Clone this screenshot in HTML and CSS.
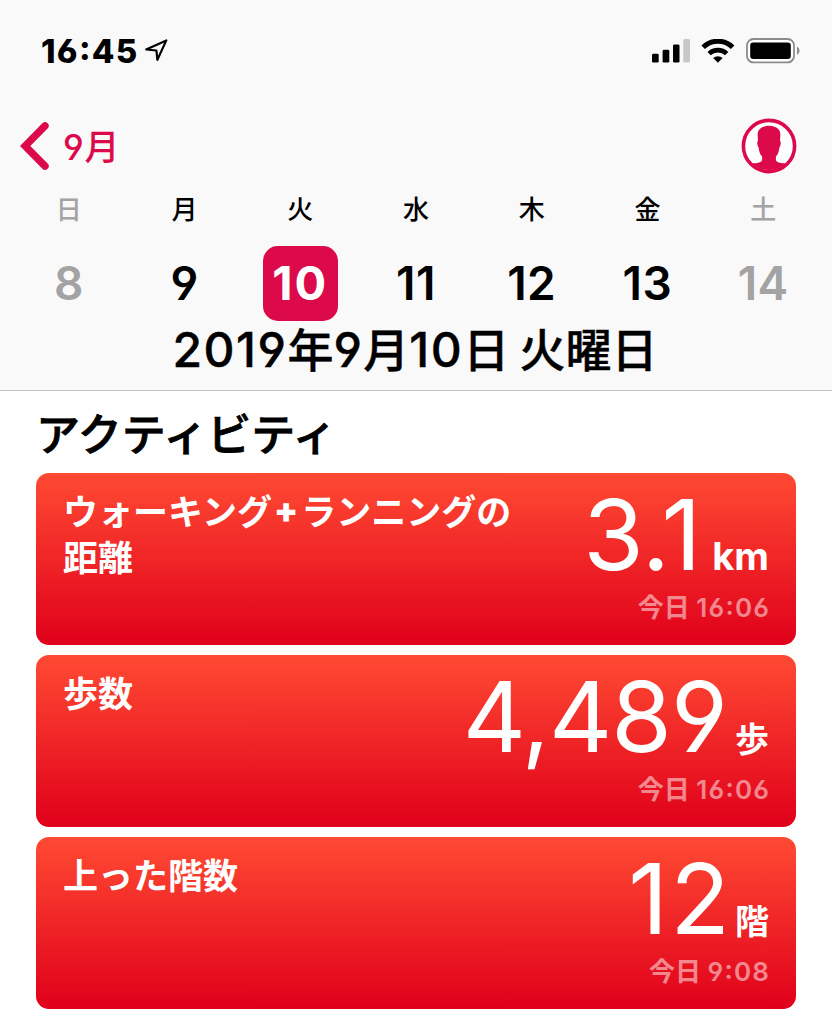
FILE: index.html
```html
<!DOCTYPE html>
<html lang="ja">
<head>
  <meta charset="UTF-8">
  <meta name="viewport" content="width=device-width, initial-scale=1.0">
  <title>ヘルスケア</title>
  <link rel="stylesheet" href="styles.css">
</head>
<body>

  <header class="header">
    <div class="status-bar">
      <span class="time">16:45</span>
      <svg class="location" width="24" height="24" viewBox="0 0 24 24">
        <path d="M1.2 10.5 L21.3 1.4 L12.4 20.8 L11.4 11.5 Z" fill="none" stroke="#000" stroke-width="2.2" stroke-linejoin="round"/>
      </svg>
      <svg class="signal" width="38" height="24" viewBox="0 0 38 24">
        <rect x="0" y="14.8" width="6.7" height="8.8" rx="1.4"/>
        <rect x="10.6" y="10.8" width="6.7" height="12.8" rx="1.4"/>
        <rect x="21" y="5.4" width="6.5" height="18.2" rx="1.4"/>
        <rect x="31.3" y="0" width="6.7" height="23.6" rx="1.4" fill="#c8c8c8"/>
      </svg>
      <svg class="wifi" width="34" height="24" viewBox="0 0 34 24">
        <path d="M2.2 8.2 A21 21 0 0 1 31.6 8.2" fill="none" stroke="#000" stroke-width="5"/>
        <path d="M8.1 14.6 A12.8 12.8 0 0 1 25.7 14.6" fill="none" stroke="#000" stroke-width="4.6"/>
        <path d="M12.2 19 A7 7 0 0 1 21.6 19 L16.9 23.7 Z"/>
      </svg>
      <svg class="battery" width="54" height="26" viewBox="0 0 54 26">
        <rect x="1" y="1" width="47" height="23.4" rx="6.5" fill="#fff" stroke="#8c8c8c" stroke-width="1.8"/>
        <rect x="4.2" y="4.4" width="40.6" height="16.6" rx="3"/>
        <path d="M51 8.6 Q53.6 9.8 53.6 12.7 Q53.6 15.6 51 17 Z" fill="#8c8c8c"/>
      </svg>
    </div>

    <div class="nav-bar">
      <a class="back" href="#">
        <svg width="31" height="50" viewBox="0 0 31 50">
          <path d="M26 4.8 L6.2 25 L26 45.2" fill="none" stroke="#dc0a4b" stroke-width="7.4" stroke-linecap="round" stroke-linejoin="miter"/>
        </svg>
        <span>9月</span>
      </a>
      <svg class="profile" width="56" height="56" viewBox="0 0 56 56">
        <circle cx="28" cy="28" r="25.6" fill="#fff" stroke="#dc0a4b" stroke-width="3.6"/>
        <path d="M28 7.8 C32 7.8 35.5 9 37.6 11.4 C39 13 39.6 15 39.3 18 L39 22.8 C40.2 23.4 39.8 28 38.4 29.4 C38 33 37.2 36.2 34.9 38.4 L34.9 42 C35.5 45 41 44.9 44.8 45.6 A25 25 0 0 1 11.2 45.6 C15 44.9 20.5 45 21.1 42 L21.1 38.4 C18.8 36.2 18 33 17.6 29.4 C16.2 28 15.8 23.4 17 22.8 L16.7 18 C16.4 15 17 13 18.4 11.4 C20.5 9 24 7.8 28 7.8 Z" fill="#dc0a4b"/>
      </svg>
    </div>

    <div class="week">
      <div class="day weekend"><span class="name">日</span><span class="num">8</span></div>
      <div class="day"><span class="name">月</span><span class="num">9</span></div>
      <div class="day selected"><span class="name">火</span><span class="num">10</span></div>
      <div class="day"><span class="name">水</span><span class="num">11</span></div>
      <div class="day"><span class="name">木</span><span class="num">12</span></div>
      <div class="day"><span class="name">金</span><span class="num">13</span></div>
      <div class="day weekend"><span class="name">土</span><span class="num">14</span></div>
    </div>

    <div class="full-date"><span>2019</span>年<span>9</span>月<span>10</span>日 火曜日</div>
  </header>

  <main class="content">
    <h1>アクティビティ</h1>

    <div class="card">
      <div class="title">ウォーキング<b>+</b>ランニングの<br>距離</div>
      <div class="data">
        <div class="value"><span class="amount">3.1</span><span class="unit km">km</span></div>
        <div class="updated">今日 <span>16:06</span></div>
      </div>
    </div>

    <div class="card">
      <div class="title">歩数</div>
      <div class="data">
        <div class="value"><span class="amount steps">4,489</span><span class="unit">歩</span></div>
        <div class="updated">今日 <span>16:06</span></div>
      </div>
    </div>

    <div class="card">
      <div class="title">上った階数</div>
      <div class="data">
        <div class="value"><span class="amount floors">12</span><span class="unit">階</span></div>
        <div class="updated">今日 <span>9:08</span></div>
      </div>
    </div>
  </main>

</body>
</html>
```
FILE: styles.css
```css
* {
  box-sizing: border-box;
}

body {
  font-family: Inter, "Noto Sans CJK JP", sans-serif;
  font-feature-settings: "cv03", "cv04", "case"; /* open 6 and 9, raised colon */
  background-color: #fff;
  color: #000;
  margin: 0;
  height: 1024px;
  overflow: hidden;
}

.header {
  background-color: #f9f9f9;
  height: 391px;
  border-bottom: 1px solid #c4c4c6;
}

/* Status bar */
.status-bar {
  display: flex;
  align-items: center;
  height: 102px;
  padding: 0 32px 0 41px;
}

.time {
  font-size: 33px;
  font-weight: 800;
  letter-spacing: 1.3px;
  line-height: 40px;
  width: 104px;
}

.signal {
  margin-left: auto;
}

.wifi {
  margin-left: 11px;
}

.battery {
  margin-left: 11px;
}

/* Navigation */
.nav-bar {
  display: flex;
  align-items: center;
  justify-content: space-between;
  height: 88px;
  padding: 0 35px 0 19px;
}

.back {
  display: flex;
  align-items: center;
  gap: 13px;
  color: #dc0a4b;
  font-size: 35px;
  font-weight: 500;
  letter-spacing: 0.8px;
  line-height: 50px;
  text-decoration: none;
}

.back span {
  padding-top: 2px;
}

/* Week */
.week {
  display: flex;
  height: 131px;
  padding: 0 11px;
}

.day {
  flex: 1;
  display: flex;
  flex-direction: column;
  align-items: center;
}

.name {
  font-size: 26px;
  font-weight: 500;
  line-height: 40px;
  height: 56px;
}

.num {
  width: 75px;
  height: 75px;
  border-radius: 15px;
  font-size: 46px;
  font-weight: 600;
  letter-spacing: 0.5px;
  line-height: 74px;
  text-align: center;
}

.weekend {
  color: #a3a3a3;
}

.selected .num {
  background-color: #dc0a4b;
  color: #fff;
  font-size: 47px;
  font-weight: 700;
  letter-spacing: 2px;
}

.full-date {
  font-size: 46px;
  font-weight: 500;
  line-height: 57px;
  text-align: center;
  word-spacing: -2px;
  padding-right: 2px;
  -webkit-text-stroke: 0.4px #000;
}

.full-date span {
  font-size: 48px;
  letter-spacing: 1.5px;
}

/* Cards */
.content {
  padding: 0 36px;
}

h1 {
  font-size: 44px;
  font-weight: 500;
  line-height: 88px;
  height: 82px;
  margin: 0;
  -webkit-text-stroke: 0.8px #000;
}

.card {
  display: flex;
  justify-content: space-between;
  height: 172px;
  margin-bottom: 10px;
  padding: 16px 27px 0;
  border-radius: 13px;
  background: linear-gradient(#ff4a33, #e0001a);
  color: #fff;
}

.title {
  font-size: 35px;
  font-weight: 700;
  line-height: 46px;
  white-space: nowrap;
}

.title b {
  font-weight: 900;
  margin: 0 3px 0 2px;
}

.data {
  text-align: right;
}

.value {
  display: flex;
  justify-content: flex-end;
  align-items: baseline;
  height: 100px;
  line-height: 92px;
}

.amount {
  font-size: 98px;
  font-weight: 400;
}

.steps {
  letter-spacing: -1px;
}

.floors {
  letter-spacing: 2px;
}

.unit {
  font-size: 34px;
  font-weight: 700;
  margin-left: 4px;
}

.steps + .unit {
  margin-left: 8px;
}

.floors + .unit {
  margin-left: 3px;
}

.km {
  font-size: 38px;
  margin-left: 11px;
}

.updated {
  color: rgba(255, 255, 255, 0.5);
  font-size: 26px;
  font-weight: 600;
  line-height: 38px;
}

.updated span {
  font-size: 26px;
  letter-spacing: 1.2px;
  margin-right: -1.2px;
}
```
